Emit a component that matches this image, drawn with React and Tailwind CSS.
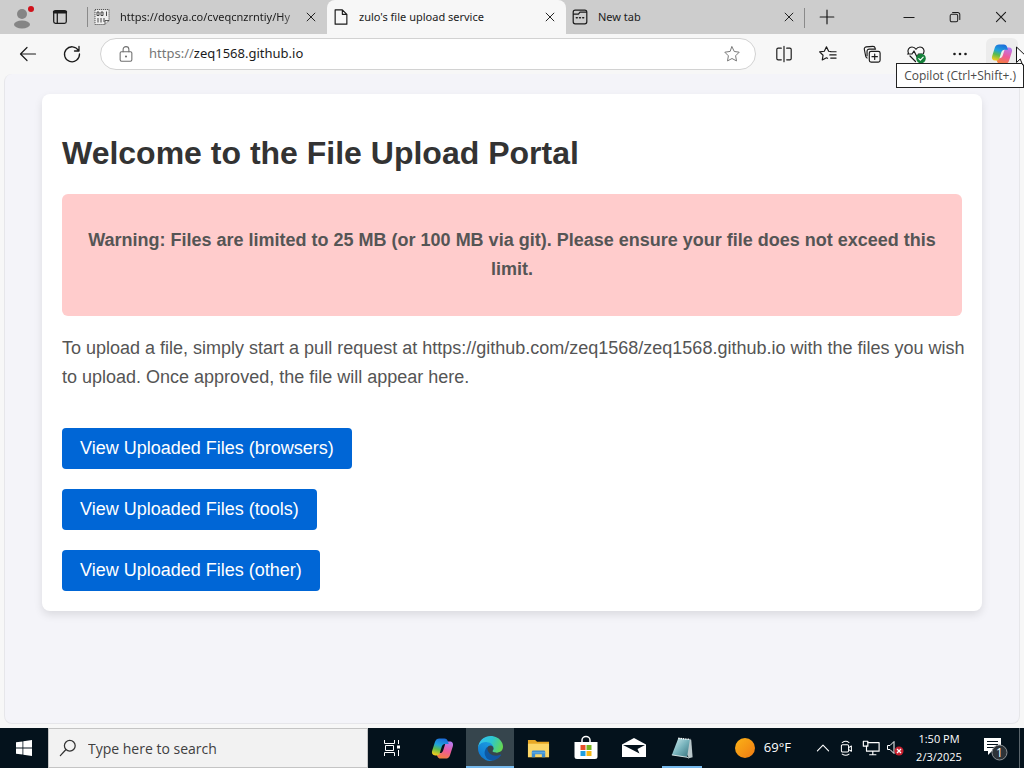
import { useState } from 'react';

const TABS = [
  { title: 'https://dosya.co/cveqcnzrntiy/Hy', icon: 'binary', faded: true },
  { title: "zulo's file upload service", icon: 'page', active: true },
  { title: 'New tab', icon: 'newtab', divider: true },
];

const FOLDERS = ['browsers', 'tools', 'other'];

/* ---------- icons ---------- */

function Line({ size = 16, width = 1.2, children }) {
  return (
    <svg
      width={size}
      height={size}
      viewBox="0 0 20 20"
      fill="none"
      stroke="currentColor"
      strokeWidth={width}
      strokeLinecap="round"
      strokeLinejoin="round"
      className="shrink-0"
      aria-hidden="true"
    >
      {children}
    </svg>
  );
}

function CloseIcon({ size = 12 }) {
  return (
    <Line size={size} width={1.6}>
      <path d="M3.500 3.500l13 13M16.500 3.500l-13 13" />
    </Line>
  );
}

function TabIcon({ type }) {
  if (type === 'binary') {
    return (
      <svg width="16" height="16" viewBox="0 0 16 16" fill="none" stroke="#333" className="shrink-0" aria-hidden="true">
        <path d="M1 .5h14v11l-4 4H1z" fill="#eee" strokeWidth="0.800" strokeDasharray="1.200 0.800" />
        <path d="M11 15v-3.500h4" strokeWidth="0.8" />
        <path d="M3 3h2v3.500H3zM7 3h2v3.500H7zM12.500 2.500V7M4 9v4.500M7 9v4.500M10 9v4" strokeWidth="0.900" />
      </svg>
    );
  }
  if (type === 'page') {
    return (
      <Line size={18} width={1.300}>
        <path d="M3.500 2h8l5 5v11h-13zM11.500 2v5h5" />
      </Line>
    );
  }
  return (
    <Line size={16} width={1.500}>
      <rect x="1.500" y="1.500" width="17" height="17" rx="2.500" />
      <path d="M2 6.500h6l2-2.500h8" />
      <path d="M5.500 11h1M9.500 11h1M13.500 11h1" strokeWidth="2" />
    </Line>
  );
}

function CopilotLogo({ size, id }) {
  const ribbon =
    'M8.800 1.500H14c2 0 3 1.200 3.600 3l.9 2.800H14.600c-1.700 0-2.700 1-3.300 2.700l-2.200 7c-.5 1.600-1.500 2.200-3 2.200H4.500C1.700 19.200.4 17 1.200 14.400L4.200 5C4.900 2.700 6.500 1.500 8.800 1.500z';
  return (
    <svg width={size} height={size} viewBox="0 0 24 24" className="shrink-0" aria-hidden="true">
      <defs>
        <linearGradient id={`${id}-a`} x1="0.6" y1="0" x2="0.3" y2="1">
          <stop offset="0" stopColor="#1c6ddb" />
          <stop offset="0.4" stopColor="#1fa3dc" />
          <stop offset="0.66" stopColor="#5bbb4e" />
          <stop offset="1" stopColor="#f3cb1c" />
        </linearGradient>
        <linearGradient id={`${id}-b`} x1="0.600" y1="0" x2="0.300" y2="1">
          <stop offset="0" stopColor="#b77af0" />
          <stop offset="0.500" stopColor="#ee5a9a" />
          <stop offset="1" stopColor="#f5803a" />
        </linearGradient>
      </defs>
      <path
        fill={`url(#${id}-b)`}
        d="M15.200 22.500H10c-2 0-3-1.200-3.600-3l-.9-2.800h3.900c1.700 0 2.700-1 3.300-2.700l2.200-7c.5-1.600 1.500-2.200 3-2.200h1.600c2.800 0 4.100 2.200 3.300 4.800l-3 9.400c-.7 2.300-2.300 3.500-4.600 3.500z"
      />
      <path d={ribbon} fill={`url(#${id}-a)`} />
    </svg>
  );
}

function EdgeLogo() {
  return (
    <svg width="25" height="25" viewBox="0 0 256 256" aria-hidden="true">
      <defs>
        <linearGradient id="edge-a" x1="0" y1="0" x2="1" y2="0">
          <stop offset="0" stopColor="#0c59a4" />
          <stop offset="1" stopColor="#1553a0" />
        </linearGradient>
        <linearGradient id="edge-b" x1="0.8" y1="0.1" x2="0.2" y2="1">
          <stop offset="0" stopColor="#1b9de2" />
          <stop offset="1" stopColor="#0f72cc" />
        </linearGradient>
        <linearGradient id="edge-c" x1="0" y1="0.3" x2="1" y2="0.6">
          <stop offset="0" stopColor="#35c1f1" />
          <stop offset="0.5" stopColor="#2cc6cf" />
          <stop offset="1" stopColor="#66d84e" />
        </linearGradient>
      </defs>
      <path
        fill="url(#edge-a)"
        d="M231 190.500c-3.400 1.800-6.900 3.400-10.500 4.700a101.800 101.800 0 0 1-35.900 6.400c-47.300 0-88.500-32.500-88.500-74.300a31.500 31.500 0 0 1 16.400-27.300c-42.800 1.800-53.800 46.400-53.800 72.500 0 74 68.100 81.400 82.800 81.400 7.900 0 19.800-2.300 27-4.600l1.300-.4a128.300 128.300 0 0 0 66.600-52.800 4 4 0 0 0-5.400-5.600z"
      />
      <path
        fill="url(#edge-b)"
        d="M105.700 241.400a79.200 79.200 0 0 1-22.700-21.300 80.700 80.700 0 0 1 29.500-120c3.200-1.500 8.500-4.100 15.600-4a32.400 32.400 0 0 1 25.700 13 31.900 31.900 0 0 1 6.300 18.700c0-.2 24.500-79.600-80-79.600-43.900 0-80 41.700-80 78.200a130.200 130.200 0 0 0 12.100 56 128 128 0 0 0 156.400 67 75.500 75.500 0 0 1-62.800-8z"
      />
      <path
        fill="url(#edge-c)"
        d="M152.300 148.900c-.9 1-3.400 2.500-3.400 5.600 0 2.600 1.700 5.200 4.800 7.300 14.300 10 41.400 8.600 41.500 8.600a59.600 59.600 0 0 0 30.300-8.300 61.400 61.400 0 0 0 30.400-52.900c.3-22.400-8-37.300-11.300-43.900C223.500 23.900 177.700 0 128 0A128 128 0 0 0 0 126.200c.5-36.500 36.800-66 80-66 3.500 0 23.500.3 42 10.100a72.600 72.600 0 0 1 30.900 29.300c6.100 10.600 7.200 24.100 7.200 29.500s-2.700 13.300-7.800 19.900z"
      />
    </svg>
  );
}

function ExplorerIcon() {
  return (
    <svg width="23" height="23" viewBox="0 0 24 24" aria-hidden="true">
      <path d="M1 3h7.500l2 2H23v16H1z" fill="#e8a825" />
      <path d="M1 7h22v14H1z" fill="#fcd667" />
      <path d="M5 21v-5.500A1.500 1.500 0 0 1 6.500 14h11a1.500 1.500 0 0 1 1.500 1.500V21h-3.500v-3h-7v3z" fill="#3f8ed0" />
      <path d="M5 16.500h14" stroke="#66b4ea" strokeWidth="1" />
    </svg>
  );
}

function StoreIcon() {
  return (
    <svg width="26" height="26" viewBox="0 0 26 26" aria-hidden="true">
      <path d="M9 8V5a4 3.500 0 0 1 8 0v3" fill="none" stroke="#fff" strokeWidth="1.500" />
      <path d="M1.500 7h23v14.500a2.500 2.500 0 0 1-2.500 2.500H4a2.500 2.500 0 0 1-2.500-2.500z" fill="#fff" />
      <path d="M7.500 10h5v5h-5z" fill="#e8502a" />
      <path d="M13.500 10h5v5h-5z" fill="#78b51e" />
      <path d="M7.500 16h5v5h-5z" fill="#1e9fe0" />
      <path d="M13.500 16h5v5h-5z" fill="#f5b817" />
    </svg>
  );
}

function MailIcon() {
  return (
    <svg width="26" height="24" viewBox="0 0 26 24" aria-hidden="true">
      <path d="M1 8.500L13 2l12 6.500V21H1z" fill="#fff" />
      <path d="M2 9h22l-7.500 4 2 4.500z" fill="#04121c" />
    </svg>
  );
}

function NotepadIcon() {
  return (
    <svg width="24" height="24" viewBox="0 0 26 26" aria-hidden="true">
      <defs>
        <linearGradient id="note" x1="0" y1="0" x2="1" y2="1">
          <stop offset="0" stopColor="#d5eef0" />
          <stop offset="0.5" stopColor="#79b4bd" />
          <stop offset="1" stopColor="#35717d" />
        </linearGradient>
      </defs>
      <path d="M9.500 2.500L23 4l1.500 19-4 1z" fill="#b9c7ca" />
      <path d="M9 2.500l12.500 1.200L18.500 23 2 20.500z" fill="url(#note)" />
      <path d="M9 2.500l13 1.200" stroke="#fff" strokeWidth="1.500" strokeDasharray="1.500 1" />
      <path d="M2 20.500L18.500 23l2 1" stroke="#dfe9ea" fill="none" />
    </svg>
  );
}

/* ---------- browser ---------- */

function Tab({ tab, onSelect, active }) {
  return (
    <div
      className={
        active
          ? 'relative flex h-full min-w-0 max-w-[239px] flex-1 items-center rounded-t-lg bg-[#f7f7f7] pl-1 pr-2'
          : 'relative flex h-full min-w-0 max-w-[239px] flex-1 items-center pl-1 pr-2'
      }
    >
      <button type="button" onClick={onSelect} className="flex min-w-0 flex-1 items-center gap-2 text-left">
        <span className="flex w-5 shrink-0 justify-center">
          <TabIcon type={tab.icon} />
        </span>
        <span
          className={
            tab.faded
              ? 'min-w-0 flex-1 overflow-hidden whitespace-nowrap [mask-image:linear-gradient(to_right,black_88%,transparent)]'
              : 'min-w-0 flex-1 overflow-hidden whitespace-nowrap'
          }
        >
          {tab.title}
        </span>
      </button>
      <button type="button" aria-label="Close tab" className="flex size-4 shrink-0 items-center justify-center">
        <CloseIcon size={12} />
      </button>
      {tab.divider && <span className="absolute right-0 top-2 h-5 w-px bg-[#8a8a8a]" />}
    </div>
  );
}

function TabStrip() {
  const [current, setCurrent] = useState(1);
  return (
    <div className="flex h-[34px] items-center bg-[#cdcdcd] font-['Noto_Sans','Open_Sans',sans-serif] text-[11px] text-[#1b1b1b]">
      <div className="flex h-full w-[88px] shrink-0 items-center">
        <button type="button" aria-label="Profile" className="flex w-[44px] justify-center">
          <svg width="24" height="24" viewBox="0 0 24 24" aria-hidden="true">
            <circle cx="12" cy="9" r="5" fill="#858585" />
            <ellipse cx="12" cy="19.500" rx="8" ry="4" fill="#858585" />
            <circle cx="21" cy="4" r="3" fill="#d0121b" />
          </svg>
        </button>
        <button type="button" aria-label="Tab actions" className="flex w-8 justify-center">
          <Line size={18} width={1.400}>
            <rect x="3" y="3" width="14" height="14" rx="2" />
            <path d="M3.500 4.500h13" strokeWidth="3" />
            <path d="M7 6v11" />
          </Line>
        </button>
        <span className="ml-auto h-5 w-px bg-[#8a8a8a]" />
      </div>
      {TABS.map((tab, i) => (
        <Tab key={tab.icon} tab={tab} active={i === current} onSelect={() => setCurrent(i)} />
      ))}
      <button type="button" aria-label="New tab" className="flex w-[44px] shrink-0 justify-center">
        <Line size={16} width={1.500}>
          <path d="M10 1.500v17M1.500 10h17" />
        </Line>
      </button>
      <div className="ml-auto flex shrink-0">
        <button type="button" aria-label="Minimize" className="flex h-[34px] w-[46px] items-center justify-center">
          <Line size={12} width={1.700}>
            <path d="M1.500 11h17" />
          </Line>
        </button>
        <button type="button" aria-label="Restore" className="flex h-[34px] w-[46px] items-center justify-center">
          <Line size={12} width={1.700}>
            <rect x="2" y="5.500" width="12.500" height="12.500" rx="2.500" />
            <path d="M6 2.500h8.500a3.500 3.500 0 0 1 3.500 3.500v8" />
          </Line>
        </button>
        <button type="button" aria-label="Close" className="flex h-[34px] w-[46px] items-center justify-center">
          <CloseIcon size={14} />
        </button>
      </div>
    </div>
  );
}

function ToolButton({ label, children }) {
  return (
    <button type="button" aria-label={label} className="flex h-8 w-[44px] shrink-0 items-center justify-center">
      {children}
    </button>
  );
}

function Toolbar() {
  const [url, setUrl] = useState('zeq1568.github.io');
  return (
    <div className="relative flex h-10 items-center bg-[#f7f7f7] px-1.5 text-[#1b1b1b]">
      <ToolButton label="Back">
        <Line size={20}>
          <path d="M17.500 10H2.500M9 3.500L2.500 10 9 16.500" />
        </Line>
      </ToolButton>
      <ToolButton label="Refresh">
        <Line size={20} width={1.300}>
          <path d="M16.500 6.500A7.500 7.500 0 1 0 17.500 10M17 2.500v4.500h-4.500" />
        </Line>
      </ToolButton>
      <form className="mx-1.5 flex h-8 min-w-0 flex-1 items-center rounded-full border border-[#d2d2d2] bg-white pl-4 pr-3.5 font-['Noto_Sans','Open_Sans',sans-serif] text-[13px]">
        <span className="text-[#707070]">
          <Line size={18} width={1.200}>
            <rect x="3.500" y="7.500" width="13" height="10.500" rx="1.500" />
            <path d="M6.800 7.500V5a3.200 3.200 0 0 1 6.400 0v2.500" />
            <circle cx="10" cy="12.800" r="0.600" fill="currentColor" />
          </Line>
        </span>
        <label htmlFor="url" className="ml-3.5 text-[#767676]">https://</label>
        <input
          id="url"
          value={url}
          onChange={(e) => setUrl(e.target.value)}
          className="min-w-0 flex-1 bg-transparent outline-none"
        />
        <button type="button" aria-label="Add to favorites" className="text-[#777]">
          <Line size={18} width={1.100}>
            <path d="M10 2l2.500 5.200 5.500.8-4 4 1 5.700-5-2.700-5 2.700 1-5.700-4-4 5.500-.8z" />
          </Line>
        </button>
      </form>
      <ToolButton label="Split screen">
        <Line size={18} width={1.300}>
          <path d="M7 3.500H3.500A1.500 1.500 0 0 0 2 5v10a1.500 1.500 0 0 0 1.500 1.500H7M13 3.500h3.500A1.500 1.500 0 0 1 18 5v10a1.500 1.500 0 0 1-1.500 1.500H13M10 1.500v17" />
        </Line>
      </ToolButton>
      <ToolButton label="Favorites">
        <Line size={18} width={1.300}>
          <path d="M13 7.200l-2.300-.3L8.300 2 5.900 6.900l-5.200.8 3.800 3.700-.9 5.300 4.700-2.500 1.200.6" />
          <path d="M13 7.500h6M12 11h7M13 14.500h6" />
        </Line>
      </ToolButton>
      <ToolButton label="Collections">
        <Line size={18} width={1.300}>
          <rect x="7" y="7" width="12" height="12" rx="2" />
          <path d="M13 10v6M10 13h6" />
          <path d="M4.500 14.500A3 3 0 0 1 3 12.500L1.500 5A2.500 2.500 0 0 1 3.500 2L11 1.500a2.500 2.500 0 0 1 2.500 2V4M4.500 12V7A2.500 2.500 0 0 1 7 4.500h7" />
        </Line>
      </ToolButton>
      <ToolButton label="Browser essentials">
        <Line size={20} width={1.200}>
          <path d="M2.500 9.500C.8 6 3 3 6 3c2 0 3.200 1 4 2.300C10.800 4 12 3 14 3c3 0 5.200 3 3.500 6.500M4 12l5.500 5.500" />
          <path d="M1.500 10H6l2-3 3 6 1.500-3h4" />
          <circle cx="15" cy="14.500" r="4.800" fill="#15803a" stroke="none" />
          <path d="M12.800 14.600l1.600 1.600 2.800-3" stroke="#fff" />
        </Line>
      </ToolButton>
      <ToolButton label="Settings and more">
        <svg width="16" height="4" viewBox="0 0 16 4" fill="currentColor" aria-hidden="true">
          <circle cx="2.500" cy="2" r="1.300" />
          <circle cx="8" cy="2" r="1.300" />
          <circle cx="13.500" cy="2" r="1.300" />
        </svg>
      </ToolButton>
      <button
        type="button"
        aria-label="Copilot"
        aria-describedby="copilot-tip"
        className="ml-1 flex h-8 w-8 shrink-0 items-center justify-center rounded-md bg-[#ececec]"
      >
        <CopilotLogo size={22} id="cp-bar" />
      </button>
      <div
        id="copilot-tip"
        role="tooltip"
        className="absolute right-0 top-[29px] z-10 flex h-[25px] items-center whitespace-nowrap border border-[#222] bg-white px-[7px] text-[12px] text-[#4a4a4a]"
      >
        Copilot (Ctrl+Shift+.)
      </div>
      {/* mouse pointer */}
      <svg
        className="absolute right-0 top-3 z-20 overflow-hidden"
        width="8"
        height="20"
        viewBox="0 0 8 20"
        fill="#fff"
        stroke="#111"
        aria-hidden="true"
      >
        <path d="M.5 1v15.500l3.700-3.500 2.500 6H12V12z" />
      </svg>
    </div>
  );
}

/* ---------- page ---------- */

function Portal() {
  return (
    <main className="flex flex-1 flex-col bg-[#f7f7f7] px-1 pb-1">
      <div className="flex-1 rounded-lg border border-t-0 border-[#e6e6ea] bg-[#f4f4f9] px-5 py-5 font-['Liberation_Sans',Arial,sans-serif] text-[18px] leading-[29px] text-[#555]">
        <div className="mx-auto max-w-[940px] rounded-lg bg-white px-5 pb-5 pt-9 shadow-[0_4px_8px_rgba(0,0,0,0.1)]">
          <h1 className="text-[32px] font-bold leading-[46px] text-[#333]">Welcome to the File Upload Portal</h1>
          <div className="mt-[18px] rounded-md bg-[#ffcccc] px-5 py-8 text-center font-bold">
            <p>
              Warning: Files are limited to 25 MB (or 100 MB via git). Please ensure your file does not exceed this
              limit.
            </p>
          </div>
          {/* the long address runs slightly into the card's padding */}
          <p className="-mr-2 mt-[18px]">
            To upload a file, simply start a pull request at https://github.com/zeq1568/zeq1568.github.io with the files
            you wish to upload. Once approved, the file will appear here.
          </p>
          <div className="mt-9 flex flex-col items-start gap-5">
            {FOLDERS.map((name) => (
              <a
                key={name}
                href={`#${name}`}
                className="rounded bg-[#0066d6] px-[18px] py-1.5 text-white hover:bg-[#0056b3]"
              >
                View Uploaded Files ({name})
              </a>
            ))}
          </div>
        </div>
      </div>
    </main>
  );
}

/* ---------- taskbar ---------- */

function TaskButton({ label, running, active, children }) {
  return (
    <button
      type="button"
      aria-label={label}
      className={
        active
          ? 'relative flex h-full w-12 items-center justify-center bg-[#36454d]'
          : 'relative flex h-full w-12 items-center justify-center'
      }
    >
      {children}
      {active && <span className="absolute inset-x-0 bottom-0 h-0.5 bg-[#76b9ed]" />}
      {running && <span className="absolute inset-x-1 bottom-0 h-0.5 bg-[#76b9ed]" />}
    </button>
  );
}

function Taskbar() {
  const [query, setQuery] = useState('');
  return (
    <footer className="flex h-10 items-center bg-[#04121c] text-white">
      <button type="button" aria-label="Start" className="flex h-full w-12 shrink-0 items-center justify-center">
        <svg width="16" height="16" viewBox="0 0 16 16" fill="#fff" aria-hidden="true">
          <path d="M0 2.300l6.500-.9v6.200H0zM7.300 1.300L16 0v7.600H7.300zM0 8.400h6.500v6.200L0 13.700zM7.300 8.400H16V16l-8.700-1.200z" />
        </svg>
      </button>
      <label
        htmlFor="search"
        className="flex h-full w-80 min-w-0 items-center gap-[11px] border border-[#c4c4c4] bg-[#f2f2f2] pl-2.5 text-[#333]"
      >
        <Line size={18} width={1.400}>
          <circle cx="12" cy="7.500" r="6" />
          <path d="M7.500 12L1.500 18.500" />
        </Line>
        <input
          id="search"
          value={query}
          onChange={(e) => setQuery(e.target.value)}
          placeholder="Type here to search"
          className="min-w-0 flex-1 bg-transparent text-[14px] outline-none placeholder:text-[#404040]"
        />
      </label>
      <TaskButton label="Task view">
        <svg width="17" height="16" viewBox="0 0 17 16" fill="none" stroke="#fff" aria-hidden="true">
          <path d="M.5 0v3.500h10V0M.5 16v-3.500h10V16M1.500 5.500h8v5h-8zM14.500 0v4M14.500 10v6" />
          <path d="M13 5.500h3v3h-3z" fill="#fff" stroke="none" />
        </svg>
      </TaskButton>
      <div className="ml-0.5 flex h-full">
        <TaskButton label="Copilot">
          <CopilotLogo size={23} id="cp-task" />
        </TaskButton>
        <TaskButton label="Microsoft Edge" active>
          <EdgeLogo />
        </TaskButton>
        <TaskButton label="File Explorer">
          <ExplorerIcon />
        </TaskButton>
        <TaskButton label="Microsoft Store">
          <StoreIcon />
        </TaskButton>
        <TaskButton label="Mail">
          <MailIcon />
        </TaskButton>
        <TaskButton label="Notepad" running>
          <NotepadIcon />
        </TaskButton>
      </div>
      <div className="ml-auto flex h-full shrink-0 items-center">
        <button type="button" className="mr-5 flex items-center gap-2 text-[13px]">
          <svg width="22" height="22" viewBox="0 0 22 22" aria-hidden="true">
            <defs>
              <linearGradient id="sun" x1="0" y1="0" x2="1" y2="1">
                <stop offset="0" stopColor="#fbb417" />
                <stop offset="1" stopColor="#f07a12" />
              </linearGradient>
            </defs>
            <circle cx="11" cy="11" r="10" fill="url(#sun)" />
          </svg>
          69°F
        </button>
        <button type="button" aria-label="Show hidden icons" className="flex w-6 justify-center">
          <Line size={14} width={1.600}>
            <path d="M2 14l8-8 8 8" />
          </Line>
        </button>
        <button type="button" aria-label="Meet now" className="flex w-6 justify-center">
          <Line size={16} width={1.300}>
            <rect x="3" y="6" width="9" height="9" rx="1.500" />
            <path d="M12 9.500l3.500-2v6.500l-3.500-2M4 3.200c3-2 6-2 8.500 0M4 17.600c3 2 6 2 8.500 0" />
          </Line>
        </button>
        <button type="button" aria-label="Network" className="flex w-6 justify-center">
          <Line size={18} width={1.300}>
            <path d="M6.500 4H19v9.500H5V8M8.500 17.500h7M12 13.500v4" />
            <path d="M1.500 2.500h5V8h-5z" />
          </Line>
        </button>
        <button type="button" aria-label="Volume muted" className="flex w-6 justify-center">
          <svg width="18" height="18" viewBox="0 0 18 18" fill="none" aria-hidden="true">
            <path d="M1.500 6.500H4l4-4v12l-4-4H1.500z" stroke="#fff" />
            <circle cx="13" cy="12" r="4.500" fill="#c8202f" />
            <path d="M11 10l4 4M15 10l-4 4" stroke="#fff" strokeWidth="1.300" />
          </svg>
        </button>
        <button type="button" className="ml-1 flex w-14 flex-col items-center text-[11px] leading-[18px]">
          <span>1:50 PM</span>
          <span>2/3/2025</span>
        </button>
        <button type="button" aria-label="Notifications" className="ml-3 mr-2 flex w-8 justify-center">
          <svg width="26" height="26" viewBox="0 0 26 26" aria-hidden="true">
            <path d="M2 3h17v13H10l-4 4v-4H2z" fill="#fff" />
            <path d="M5 6.500h11M5 9.500h11M5 12.500h8" stroke="#04121c" />
            <circle cx="17.500" cy="17.500" r="7.500" fill="#2d3338" stroke="#8b9094" />
            <text x="17.500" y="22" textAnchor="middle" fontSize="12" fill="#fff">1</text>
          </svg>
        </button>
        <button type="button" aria-label="Show desktop" className="h-full w-[5px] border-l border-[#5a646b]" />
      </div>
    </footer>
  );
}

export default function App() {
  return (
    <div className="flex min-h-screen flex-col font-['Open_Sans','Noto_Sans',sans-serif]">
      <TabStrip />
      <Toolbar />
      <Portal />
      <Taskbar />
    </div>
  );
}
